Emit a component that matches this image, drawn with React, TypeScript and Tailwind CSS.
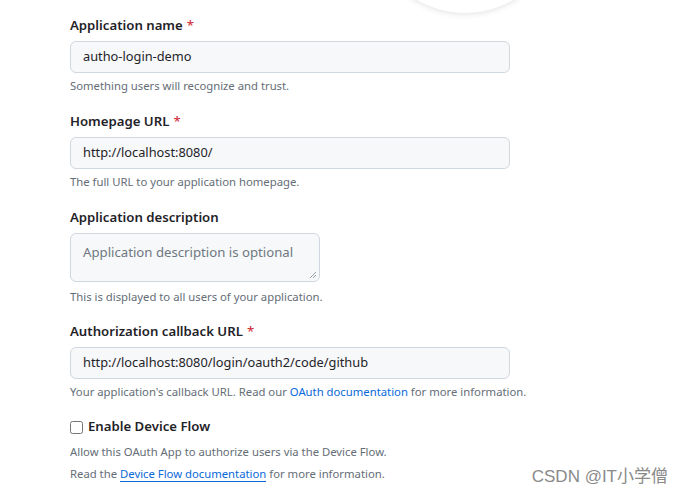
import React from "react";

const Label = ({ text, required }: { text: string; required?: boolean }) => (
  <div className="h-5 text-[13.2px] leading-5 font-semibold text-[#1f2328] mb-[6px]">
    {text}
    {required && <span className="text-[#cf222e] font-normal ml-1">*</span>}
  </div>
);

const Input = ({ value }: { value: string }) => (
  <div className="w-[440px] h-8 rounded-md border border-[#d0d7de] bg-[#f6f8fa] px-3 flex items-center text-[12.8px] text-[#1f2328]">
    {value}
  </div>
);

const Help = ({ children, className = "" }: { children: React.ReactNode; className?: string }) => (
  <p className={`text-[11.3px] leading-[18px] text-[#656d76] ${className}`}>{children}</p>
);

export default function App() {
  return (
    <div
      className="relative w-[683px] h-[498px] overflow-hidden bg-white"
      style={{ fontFamily: '"Segoe UI", "Noto Sans", "Liberation Sans", sans-serif' }}
    >
      {/* avatar circle peeking at the top */}
      <div className="absolute left-[370px] top-[-177px] w-[190px] h-[190px] rounded-full bg-white shadow-[0_1px_6px_rgba(0,0,0,0.12)]" />

      <div className="pl-[70px] pt-[15px] flex flex-col">
        <div className="mb-4">
          <Label text="Application name" required />
          <Input value="autho-login-demo" />
          <Help className="mt-1">Something users will recognize and trust.</Help>
        </div>

        <div className="mb-4">
          <Label text="Homepage URL" required />
          <Input value="http://localhost:8080/" />
          <Help className="mt-1">The full URL to your application homepage.</Help>
        </div>

        <div className="mb-[15px]">
          <Label text="Application description" />
          <div className="relative w-[250px] h-[49px] rounded-md border border-[#d0d7de] bg-[#f6f8fa] px-3 pt-[9px] text-[13.2px] text-[#6e7781]">
            Application description is optional
            <svg className="absolute right-[2px] bottom-[2px]" width="9" height="9" viewBox="0 0 9 9">
              <path d="M8 2 L2 8 M8 5 L5 8" stroke="#9aa0a6" strokeWidth="1" />
            </svg>
          </div>
          <Help className="mt-[6px]">This is displayed to all users of your application.</Help>
        </div>

        <div className="mb-4">
          <Label text="Authorization callback URL" required />
          <Input value="http://localhost:8080/login/oauth2/code/github" />
          <Help className="mt-1">
            Your application's callback URL. Read our{" "}
            <span className="text-[#0969da]">OAuth documentation</span> for more information.
          </Help>
        </div>

        <div>
          <label className="flex items-center gap-[5px] h-5 text-[13.2px] font-semibold text-[#1f2328]">
            <input type="checkbox" className="w-[13px] h-[13px] m-0" />
            Enable Device Flow
          </label>
          <Help className="mt-[6px]">Allow this OAuth App to authorize users via the Device Flow.</Help>
          <Help className="mt-1">
            Read the{" "}
            <span className="text-[#0969da] border-b border-[#0969da]">Device Flow documentation</span> for more
            information.
          </Help>
        </div>
      </div>

      <div
        className="absolute right-[15px] bottom-[9px] text-[17px] text-[#8a8a8a]"
        style={{ fontFamily: '"Liberation Sans", "Noto Sans CJK SC", sans-serif' }}
      >
        CSDN @IT小学僧
      </div>
    </div>
  );
}
